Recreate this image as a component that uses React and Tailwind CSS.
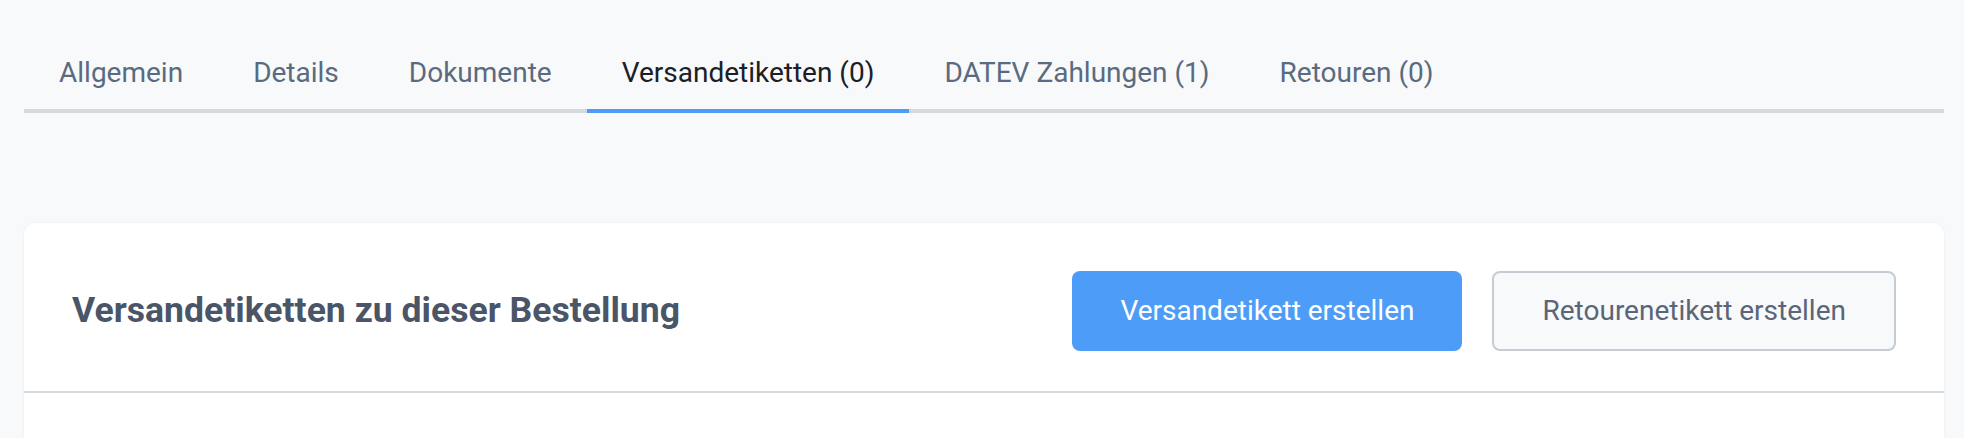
import React, { useState } from 'react';

const tabs = [
  'Allgemein',
  'Details',
  'Dokumente',
  'Versandetiketten (0)',
  'DATEV Zahlungen (1)',
  'Retouren (0)',
];

const App = () => {
  const [active, setActive] = useState(3);

  return (
    <div
      className="h-[438px] overflow-hidden bg-[#f8f9fb] pl-6 pr-5"
      style={{ fontFamily: 'Roboto, "Noto Sans", sans-serif' }}
    >
      {/* Tabs */}
      <div className="mt-[53px] flex border-b-4 border-[#d4d9de]">
        {tabs.map((tab, i) => (
          <button
            key={tab}
            onClick={() => setActive(i)}
            className={`-mb-1 border-b-4 px-[35px] pb-4 text-[28px] leading-[40px] ${
              i === active
                ? 'border-[#4d9cf8] text-[#1c2025]'
                : 'border-transparent text-[#5a6b7f]'
            }`}
          >
            {tab}
          </button>
        ))}
      </div>

      {/* Card */}
      <div className="mt-[110px] rounded-[12px] bg-white shadow-[0_0_3px_rgba(0,0,0,0.06)]">
        <div className="flex h-[170px] items-center justify-between border-b-2 border-[#d4d9de] px-12 pt-[8px]">
          <h2 className="text-[35.6px] font-bold text-[#4a5568]">
            Versandetiketten zu dieser Bestellung
          </h2>
          <div className="flex gap-[30px]">
            <button className="flex h-[80px] items-center rounded-[8px] bg-[#4d9cf8] px-12 text-[28px] text-white">
              Versandetikett erstellen
            </button>
            <button className="flex h-[80px] items-center rounded-[8px] border-2 border-[#c6ccd4] bg-[#f8f9fb] px-12 text-[28px] text-[#5a6577]">
              Retourenetikett erstellen
            </button>
          </div>
        </div>
        <div className="h-[120px]" />
      </div>
    </div>
  );
};

export default App;
